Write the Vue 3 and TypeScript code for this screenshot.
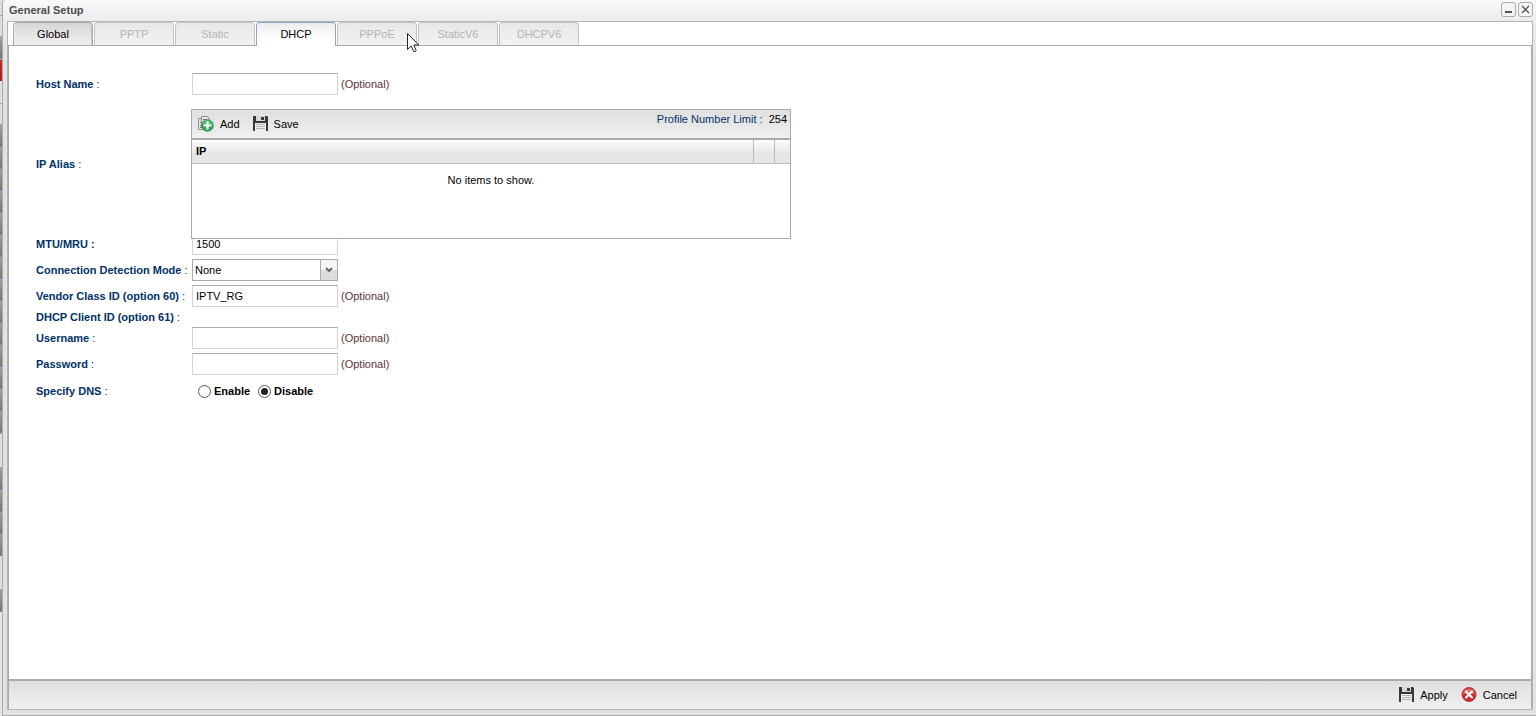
<script setup lang="ts">
import { ref } from 'vue'

interface Tab {
  label: string
  disabled: boolean
}

const tabs: Tab[] = [
  { label: 'Global', disabled: false },
  { label: 'PPTP', disabled: true },
  { label: 'Static', disabled: true },
  { label: 'DHCP', disabled: false },
  { label: 'PPPoE', disabled: true },
  { label: 'StaticV6', disabled: true },
  { label: 'DHCPV6', disabled: true },
]

const activeTab = ref('DHCP')
const hostName = ref('')
const mtu = ref('1500')
const detection = ref('None')
const vendorClass = ref('IPTV_RG')
const username = ref('')
const password = ref('')
const dns = ref('disable')
</script>

<template>
  <div class="screen">
    <div class="backdrop" aria-hidden="true">
      <i class="pale s16"></i>
      <i class="pale s21"></i>
      <i class="dark s23"></i>
      <i class="red s21"></i>
      <i class="pale s23"></i>
      <i class="pale s21"></i>
      <i class="dark s309"></i>
      <i class="pale s34"></i>
      <i class="dark s88"></i>
      <i class="pale s34"></i>
      <i class="dark s22"></i>
    </div>

    <main class="window">
      <header class="titlebar">
        <h1>General Setup</h1>
        <div class="window-buttons">
          <button type="button" class="window-button" aria-label="Minimize">
            <svg width="13" height="13" viewBox="0 0 13 13"><path d="M3 8h7v2H3z" fill="#555" /></svg>
          </button>
          <button type="button" class="window-button" aria-label="Close">
            <svg width="13" height="13" viewBox="0 0 13 13">
              <path d="M3 3l7 7M10 3l-7 7" stroke="#555" stroke-width="1.3" fill="none" />
            </svg>
          </button>
        </div>
      </header>

      <div class="frame">
        <nav class="tabs" role="tablist">
          <button
            v-for="tab in tabs"
            :key="tab.label"
            type="button"
            role="tab"
            class="tab"
            :class="{ active: tab.label === activeTab, disabled: tab.disabled }"
            :disabled="tab.disabled"
            :aria-selected="tab.label === activeTab"
            @click="activeTab = tab.label"
          >
            {{ tab.label }}
          </button>
        </nav>

        <section class="panel">
          <form class="form" @submit.prevent>
            <div class="row">
              <label class="name" for="host"><b>Host Name</b> :</label>
              <div class="field">
                <input id="host" v-model="hostName" class="box" type="text" />
                <span class="optional">(Optional)</span>
              </div>
            </div>

            <div class="row alias">
              <span id="alias-label" class="name"><b>IP Alias</b> :</span>
              <div class="grid" role="group" aria-labelledby="alias-label">
                <div class="toolbar">
                  <button type="button" class="tool">
                    <svg width="16" height="16" viewBox="0 0 16 16">
                      <path d="M3.500.500h6l1.500 2v9H3.500z" fill="#e6e6e6" stroke="#8a8a8a" />
                      <path d="M3 2.500H.500v11H8" fill="none" stroke="#8a8a8a" />
                      <path d="M2 4v8" stroke="#eee" />
                      <path d="M5 3.500h4M5 5.500h2M2 6.500h1M2 9.500h2M2 11.500h2" stroke="#777" />
                      <circle cx="9.500" cy="9.500" r="5.800" fill="#2ea05a" stroke="#259050" stroke-width=".8" />
                      <path d="M4.500 9a5 5 0 0 1 10 0q-5 2-10 0" fill="#85cf9b" opacity=".5" />
                      <path d="M9.500 5.500v8M5.500 9.500h8" stroke="#fff" stroke-width="2.200" />
                    </svg>
                    Add
                  </button>
                  <button type="button" class="tool">
                    <svg width="15" height="16" viewBox="0 0 15 16">
                      <path d="M0 0h14l1 1v14H0z" fill="#39363a" />
                      <path d="M3 0h9v5H3z" fill="#d7d7d7" />
                      <path d="M8 1h3v3H8z" fill="#39363a" />
                      <path d="M2 7h11v8H2z" fill="#efefef" />
                      <path d="M3 8.500h9M3 10.500h9M3 12.500h9" stroke="#b4b4b4" />
                    </svg>
                    Save
                  </button>
                  <p class="limit"><span>Profile Number Limit :</span> <output>254</output></p>
                </div>
                <table class="items">
                  <thead>
                    <tr>
                      <th scope="col">IP</th>
                      <th class="c21"></th>
                      <th class="c16"></th>
                    </tr>
                  </thead>
                  <tbody>
                    <tr><td colspan="3">No items to show.</td></tr>
                  </tbody>
                </table>
              </div>
            </div>

            <div class="row">
              <label class="name" for="mtu"><b>MTU/MRU :</b></label>
              <div class="field"><input id="mtu" v-model="mtu" class="box" type="text" /></div>
            </div>

            <div class="row">
              <label class="name" for="detection"><b>Connection Detection Mode</b> :</label>
              <div class="field">
                <div class="combo">
                  <select id="detection" v-model="detection">
                    <option>None</option>
                    <option>ARP</option>
                  </select>
                  <span class="arrow" aria-hidden="true">
                    <svg width="8" height="6" viewBox="0 0 8 6">
                      <path d="M1 1l3 3 3-3" fill="none" stroke="#666" stroke-width="2" />
                    </svg>
                  </span>
                </div>
              </div>
            </div>

            <div class="row">
              <label class="name" for="vendor"><b>Vendor Class ID (option 60)</b> :</label>
              <div class="field">
                <input id="vendor" v-model="vendorClass" class="box" type="text" />
                <span class="optional">(Optional)</span>
              </div>
            </div>

            <div class="row heading">
              <span class="name"><b>DHCP Client ID (option 61)</b> :</span>
            </div>

            <div class="row">
              <label class="name" for="user"><b>Username</b> :</label>
              <div class="field">
                <input id="user" v-model="username" class="box" type="text" />
                <span class="optional">(Optional)</span>
              </div>
            </div>

            <div class="row">
              <label class="name" for="pass"><b>Password</b> :</label>
              <div class="field">
                <input id="pass" v-model="password" class="box" type="password" />
                <span class="optional">(Optional)</span>
              </div>
            </div>

            <div class="row dns">
              <span id="dns-label" class="name"><b>Specify DNS</b> :</span>
              <div class="radios" role="radiogroup" aria-labelledby="dns-label">
                <label><input v-model="dns" type="radio" name="dns" value="enable" />Enable</label>
                <label><input v-model="dns" type="radio" name="dns" value="disable" />Disable</label>
              </div>
            </div>
          </form>
        </section>

        <footer class="footer">
          <button type="button" class="tool">
            <svg width="15" height="16" viewBox="0 0 15 16">
              <path d="M0 0h14l1 1v14H0z" fill="#39363a" />
              <path d="M3 0h9v5H3z" fill="#d7d7d7" />
              <path d="M8 1h3v3H8z" fill="#39363a" />
              <path d="M2 7h11v8H2z" fill="#efefef" />
              <path d="M3 8.500h9M3 10.500h9M3 12.500h9" stroke="#b4b4b4" />
            </svg>
            Apply
          </button>
          <button type="button" class="tool">
            <svg width="16" height="16" viewBox="0 0 16 16">
              <circle cx="8" cy="7.500" r="7" fill="#cf2428" stroke="#b8383b" />
              <path d="M2 7.500a6 6 0 0 1 12 0q-6-2-12 0" fill="#f09a9a" opacity=".6" />
              <path d="M5 4.500l6 6M11 4.500l-6 6" stroke="#fff" stroke-width="2.200" stroke-linecap="round" />
            </svg>
            Cancel
          </button>
        </footer>
      </div>
    </main>

    <svg class="pointer" width="13" height="20" viewBox="0 0 13 20" aria-hidden="true">
      <path d="M.5 .5v16l3.700-3.500 2.500 5.500q1.500.8 2.500-.8L6.800 12h5z" fill="#fff" stroke="#222233" />
    </svg>
  </div>
</template>

<style>
body {
  margin: 0;
}
</style>

<style scoped>
* {
  box-sizing: border-box;
}

.screen {
  display: flex;
  position: relative;
  min-height: 100vh;
  background: #e4e4e4;
  color: #000;
  font: 11px/14px "Liberation Sans", Arial, sans-serif;
}

button,
input,
select {
  font: inherit;
  color: inherit;
  margin: 0;
}

.backdrop {
  display: flex;
  flex-direction: column;
  flex: 0 0 2px;
}

.backdrop i {
  display: block;
}

.pale {
  background: #dedede;
  border-bottom: 1px solid #aaa;
}

.red {
  background: linear-gradient(#d32a27, #b51714);
}

.dark {
  background: repeating-linear-gradient(#a0a0a0 0, #777 21px, #7288b8 21px, #7288b8 22px);
}

.s16 { height: 16px; }
.s21 { height: 21px; }
.s22 { height: 22px; }
.s23 { height: 23px; }
.s34 { height: 34px; }
.s88 { height: 88px; }
.s309 { height: 309px; }

.window {
  display: flex;
  flex-direction: column;
  flex: 1;
  min-width: 0;
  padding: 0 3px 5px 4px;
  border: 1px solid #aaa;
  border-width: 0 0 1px 1px;
  border-radius: 4px 0 0 0;
  background: linear-gradient(#fafafa, #ececec 21px, #e2e2e2 60px);
}

.titlebar {
  display: flex;
  align-items: center;
  justify-content: space-between;
  height: 21px;
  padding: 0 0 2px 2px;
}

h1 {
  margin: 0;
  font-size: 11px;
  line-height: 14px;
  color: #4c4c4c;
}

.window-buttons {
  display: flex;
  gap: 2px;
}

.window-button {
  display: grid;
  place-items: center;
  width: 15px;
  height: 15px;
  padding: 0;
  border: 1px solid #aaa;
  border-radius: 3px;
  background: #f5f5f5;
}

.frame {
  display: flex;
  flex-direction: column;
  flex: 1;
  border: 1px solid #b4b4b4;
  background: #fff;
}

.tabs {
  display: flex;
  gap: 1px;
  height: 23px;
  padding-left: 5px;
}

.tab {
  width: 80px;
  padding: 0;
  border: 1px solid #aaa;
  border-bottom: 0;
  border-radius: 4px 4px 0 0;
  background: linear-gradient(#d6d6d6, #f0f0f0);
  box-shadow: inset 1px 0 #eee, inset -1px 0 #c4c4c4;
}

.tab.disabled {
  color: #b4b4b4;
  border-color: #c4c4c4;
  background: linear-gradient(#e8e8e8, #f2f2f2);
  box-shadow: none;
}

.tab.active {
  z-index: 1;
  height: 24px;
  padding-bottom: 1px;
  border-color: #8fa6c6;
  background: linear-gradient(#ededed, #fff 15px);
  box-shadow: none;
}

.panel {
  flex: 1;
  padding: 25px 27px;
  border: 1px solid #aaa;
  border-bottom: 0;
}

.row {
  display: grid;
  grid-template-columns: 155px 1fr;
  grid-template-rows: 100%;
  align-items: center;
  height: 26px;
}

.alias {
  height: 134px;
}

.heading {
  height: 16px;
}

.dns {
  height: 28px;
}

.name {
  color: #003168;
  white-space: nowrap;
}

.field {
  display: flex;
  align-items: center;
  gap: 3px;
  padding-left: 1px;
}

.box {
  width: 146px;
  height: 22px;
  padding: 0 3px;
  border: 1px solid #d4d4d4;
  border-top-color: #aaa;
  border-radius: 0;
  outline: 0;
  background: #fff;
}

.optional {
  color: #5e3338;
}

.combo {
  display: flex;
  position: relative;
  width: 146px;
  height: 22px;
  border: 1px solid #aaa;
  background: #fff;
}

.combo select {
  flex: 1;
  padding: 0 20px 0 2px;
  border: 0;
  outline: 0;
  appearance: none;
  background: transparent;
}

.arrow {
  display: grid;
  position: absolute;
  top: 0;
  right: 0;
  bottom: 0;
  place-items: center;
  width: 17px;
  border-left: 1px solid #aaa;
  background: linear-gradient(#f6f6f6 50%, #dcdcdc 50%);
  pointer-events: none;
}

.grid {
  display: flex;
  position: relative;
  z-index: 1;
  align-self: start;
  flex-direction: column;
  width: 600px;
  height: 130px;
  margin-top: 12px;
  border: 1px solid #aaa;
  background: #fff;
}

.toolbar {
  display: flex;
  align-items: center;
  gap: 13px;
  height: 30px;
  padding: 0 3px 0 6px;
  border-bottom: 2px solid #aaa;
  background: linear-gradient(#dfdfdf, #f0f0f0);
}

.tool {
  display: flex;
  align-items: center;
  gap: 6px;
  padding: 0;
  border: 0;
  background: none;
}

.limit {
  align-self: start;
  margin: 2px 0 0 auto;
}

.limit span {
  margin-right: 3px;
  color: #003168;
}

.items {
  width: 100%;
  border-collapse: collapse;
  table-layout: fixed;
}

.items th {
  height: 23px;
  padding: 0 4px;
  border-right: 1px solid #bbb;
  border-bottom: 1px solid #bbb;
  background: linear-gradient(#fbfbfb, #e6e6e6 60%);
  text-align: left;
}

.items th:last-child {
  border-right: 0;
}

.items .c21 { width: 21px; }
.items .c16 { width: 16px; }

.items td {
  height: 34px;
  padding: 0;
  text-align: center;
}

.radios {
  display: flex;
  gap: 8px;
  padding-left: 7px;
  font-weight: bold;
}

.radios label {
  display: flex;
  align-items: center;
  gap: 3px;
}

.radios input {
  display: grid;
  place-items: center;
  width: 13px;
  height: 13px;
  border: 1px solid #555;
  border-radius: 50%;
  appearance: none;
  background: #fff;
}

.radios input:checked::before {
  content: "";
  width: 7px;
  height: 7px;
  border-radius: 50%;
  background: #222;
}

.footer {
  display: flex;
  align-items: center;
  justify-content: flex-end;
  gap: 13px;
  height: 30px;
  padding-right: 14px;
  border: 1px solid #aaa;
  border-width: 2px 1px 0;
  background: linear-gradient(#dfdfdf, #f0f0f0);
}

.pointer {
  position: absolute;
  top: 33px;
  left: 407px;
  z-index: 2;
}
</style>
